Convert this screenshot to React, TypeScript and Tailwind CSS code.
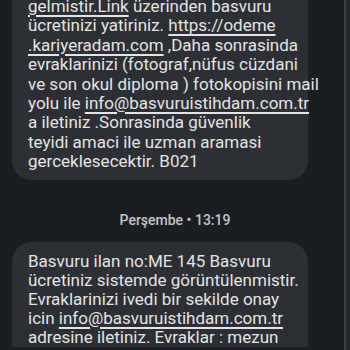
import React from 'react'

const Link = ({ children }: { children: React.ReactNode }) => (
  <span className="underline decoration-[1.5px] underline-offset-[3px]">{children}</span>
)

const Bubble = ({ lines, className }: { lines: React.ReactNode[]; className: string }) => (
  <div className={`w-[296px] bg-[#2c2f33] pl-4 text-[#e4e4e4] text-[17px] ${className}`}>
    {lines.map((line, i) => (
      <div key={i} className="whitespace-pre">{line}</div>
    ))}
  </div>
)

const firstLines = [
  <><Link>gelmistir.Link</Link> üzerinden basvuru</>,
  <>ücretinizi yatiriniz. <Link>https://odeme</Link></>,
  <><Link>.kariyeradam.com</Link> ,Daha sonrasinda</>,
  'evraklarinizi (fotograf,nüfus cüzdani',
  've son okul diploma ) fotokopisini mail',
  <>yolu ile <Link>info@basvuruistihdam.com.tr</Link></>,
  'a iletiniz .Sonrasinda güvenlik',
  'teyidi amaci ile uzman aramasi',
  'gerceklesecektir. B021',
]

const secondLines = [
  'Basvuru ilan no:ME 145 Basvuru',
  'ücretiniz sistemde görüntülenmistir.',
  'Evraklarinizi ivedi bir sekilde onay',
  <>icin <Link>info@basvuruistihdam.com.tr</Link></>,
  'adresine iletiniz. Evraklar : mezun',
]

export default function App() {
  return (
    <div className="w-[350px] h-[350px] overflow-hidden bg-[#1b1e21] flex" style={{ fontFamily: 'Roboto, "Noto Sans", sans-serif' }}>
      <div className="w-[344px] flex flex-col pl-3">
        <Bubble
          lines={firstLines}
          className="-mt-[3px] leading-[19.4px] pb-[8px] rounded-b-[20px]"
        />
        <div className="mt-[32px] h-4 leading-4 pr-[6px] text-center text-[14px] font-medium text-[#c2c5c9]">
          Perşembe • 13:19
        </div>
        <Bubble
          lines={secondLines}
          className="mt-[14px] leading-[19px] pt-[10px] rounded-t-[20px]"
        />
      </div>
      <div className="w-[2px] bg-[#3e4144]" />
      <div className="flex-1 bg-[#26292c]" />
    </div>
  )
}
